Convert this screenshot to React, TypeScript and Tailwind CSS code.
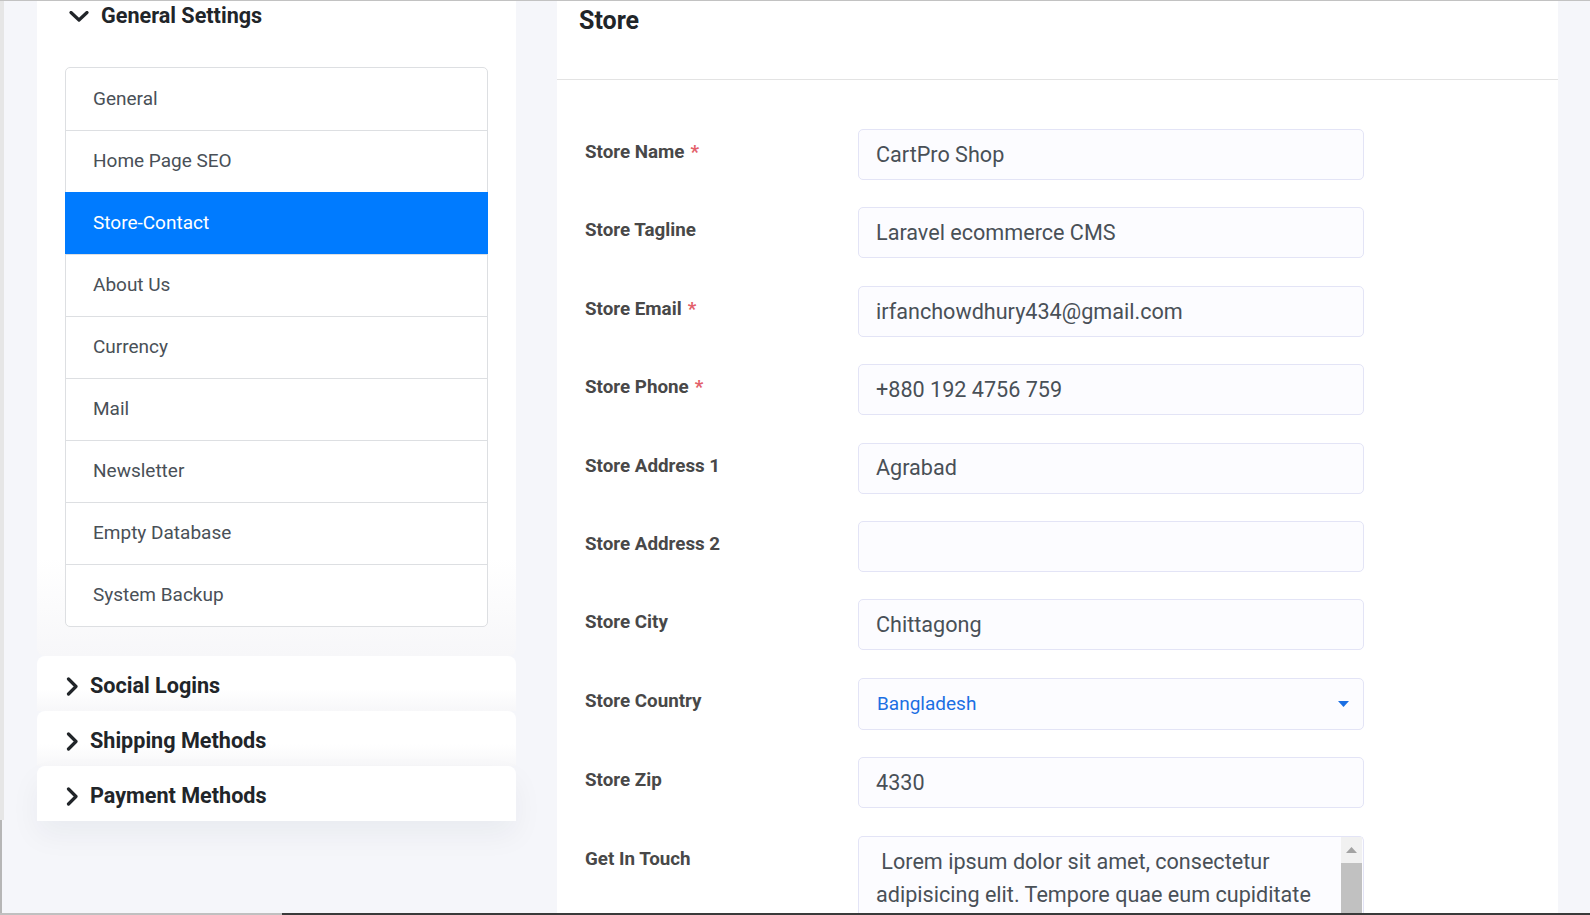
import React from 'react';

const items = ['General', 'Home Page SEO', 'Store-Contact', 'About Us', 'Currency', 'Mail', 'Newsletter', 'Empty Database', 'System Backup'];

function ChevronDown() {
  return (
    <svg width="20" height="11" viewBox="0 0 20 11" className="shrink-0">
      <path d="M2 1.5 L10 9 L18 1.5" fill="none" stroke="#212529" strokeWidth="3.2" strokeLinecap="round" strokeLinejoin="round" />
    </svg>
  );
}

function ChevronRight() {
  return (
    <svg width="13" height="19" viewBox="0 0 13 19" className="shrink-0">
      <path d="M2.5 2 L10 9.5 L2.5 17" fill="none" stroke="#212529" strokeWidth="3.2" strokeLinecap="round" strokeLinejoin="round" />
    </svg>
  );
}

type Row = { label: string; value: string; required?: boolean; kind?: 'input' | 'select' | 'textarea' };

const rows: Row[] = [
  { label: 'Store Name', value: 'CartPro Shop', required: true },
  { label: 'Store Tagline', value: 'Laravel ecommerce CMS' },
  { label: 'Store Email', value: 'irfanchowdhury434@gmail.com', required: true },
  { label: 'Store Phone', value: '+880 192 4756 759', required: true },
  { label: 'Store Address 1', value: 'Agrabad' },
  { label: 'Store Address 2', value: '' },
  { label: 'Store City', value: 'Chittagong' },
  { label: 'Store Country', value: 'Bangladesh', kind: 'select' },
  { label: 'Store Zip', value: '4330' },
  { label: 'Get In Touch', value: '', kind: 'textarea' },
];

function Field({ row }: { row: Row }) {
  if (row.kind === 'select') {
    return (
      <div className="w-[506px] h-[52px] rounded-[5px] border border-[#e3e4f6] bg-[#fcfcff] flex items-center pl-[18px] pr-[14px]">
        <span className="text-[19px] text-[#1b6fe3] flex-1 pt-[2px]">{row.value}</span>
        <svg width="11" height="6" viewBox="0 0 11 6"><path d="M0 0 H11 L5.5 6 Z" fill="#1b6fe3" /></svg>
      </div>
    );
  }
  if (row.kind === 'textarea') {
    return (
      <div className="w-[506px] h-[90px] rounded-t-[5px] border border-b-0 border-[#e3e4f6] bg-[#fcfcff] flex">
        <div className="flex-1 pl-[17px] pt-[8px] text-[21.6px] leading-[33px] text-[#495057] whitespace-nowrap">
          <div>&nbsp;Lorem ipsum dolor sit amet, consectetur</div>
          <div>adipisicing elit. Tempore quae eum cupiditate</div>
        </div>
        <div className="w-[21px] mr-[1px] bg-[#f1f1f1] flex flex-col">
          <div className="h-[26px] flex items-center justify-center">
            <svg width="11" height="6" viewBox="0 0 11 6"><path d="M0 6 H11 L5.5 0 Z" fill="#a3a3a3" /></svg>
          </div>
          <div className="flex-1 bg-[#c1c1c1]" />
        </div>
      </div>
    );
  }
  return (
    <div className="w-[506px] h-[51px] rounded-[5px] border border-[#e3e4f6] bg-[#fcfcff] flex items-center pl-[17px]">
      <span className="text-[21.6px] text-[#495057] pt-[1px]">{row.value}</span>
    </div>
  );
}

export default function App() {
  return (
    <div className="w-[1590px] h-[915px] overflow-hidden bg-[#f5f6fa] flex flex-col font-['Roboto',sans-serif]">
      <div className="h-px bg-[#c2c2c2] shrink-0" />
      <div className="flex-1 flex min-h-0">
        <div className="w-[4px] flex flex-col shrink-0">
          <div className="h-[819px] bg-[#e6e6e6]" />
          <div className="flex-1 w-[2px] bg-[#b6b6b6]" />
        </div>
        <div className="ml-[33px] w-[479px] flex flex-col shrink-0">
          <div className="bg-gradient-to-b from-white from-[85%] to-[#f7f7f9] rounded-b-[8px] pb-[29px]">
            <div className="h-[30px] flex items-center pl-[32px] gap-[12px]">
              <ChevronDown />
              <span className="text-[21.6px] font-bold text-[#212529]">General Settings</span>
            </div>
            <div className="mt-[36px] mx-[28px] border border-[#dddfe2] rounded-[5px] bg-white">
              {items.map((it, i) => {
                const active = it === 'Store-Contact';
                return (
                  <div
                    key={it}
                    className={
                      (i > 0 ? 'border-t ' : '') +
                      (active
                        ? 'relative -mx-px bg-[#007bff] border-[#007bff] text-white pl-[28px] '
                        : 'border-[#dddfe2] text-[#495057] pl-[27px] ') +
                      'h-[62px] flex items-center text-[19px]'
                    }
                  >
                    {it}
                  </div>
                );
              })}
            </div>
          </div>
          {['Social Logins', 'Shipping Methods', 'Payment Methods'].map((t, i) => (
            <div
              key={t}
              className={
                'h-[55px] rounded-t-[8px] flex items-center pl-[29px] pt-[5px] gap-[11px] ' +
                (i < 2 ? 'bg-gradient-to-b from-white from-[60%] to-[#f7f7f9]' : 'bg-white shadow-[0_14px_30px_rgba(20,30,60,0.05)]')
              }
            >
              <ChevronRight />
              <span className="text-[21.6px] font-bold text-[#212529]">{t}</span>
            </div>
          ))}
        </div>
        <div className="ml-[41px] w-[1001px] bg-white flex flex-col shrink-0">
          <div className="h-[79px] border-b border-[#e3e3e3] pl-[22px] pt-[1px] shrink-0">
            <span className="text-[25px] font-bold text-[#212529]">Store</span>
          </div>
          <div className="pt-[49px] pl-[28px] flex flex-col gap-[27.4px]">
            {rows.map((r) => (
              <div key={r.label} className="flex">
                <div className="w-[273px] pt-[10px] text-[18.8px] font-bold text-[#484848] leading-[26px]">
                  {r.label}
                  {r.required && <span className="text-[#e3606a] ml-[6px]">*</span>}
                </div>
                <Field row={r} />
              </div>
            ))}
          </div>
        </div>
      </div>
      <div className="h-[2px] flex shrink-0">
        <div className="w-[282px] bg-[#c0c0c0]" />
        <div className="flex-1 bg-[#3a3a3a]" />
      </div>
    </div>
  );
}
